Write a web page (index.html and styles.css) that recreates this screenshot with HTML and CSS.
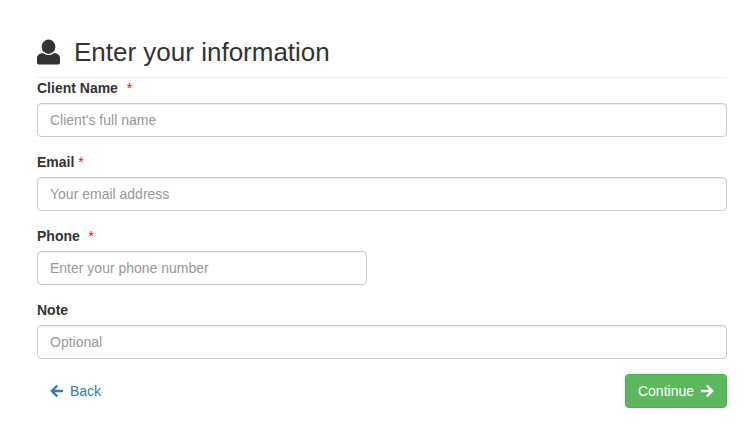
FILE: index.html
```html
<!DOCTYPE html>
<html lang="en">
<head>
    <meta charset="UTF-8">
    <title>Enter your information</title>
    <link rel="stylesheet" href="styles.css">
</head>
<body>
    <div class="container">
        <h2 class="page-title">
            <svg class="title-icon" viewBox="0 0 24 26" aria-hidden="true">
                <ellipse cx="12" cy="7.500" rx="7.200" ry="7.500"/>
                <path d="M1.500 26A1.500 1.500 0 0 1 0 24.500v-5C0 16 3 14.200 6.500 14c1.500 1.400 3.400 2.200 5.500 2.200s4-.8 5.500-2.200c3.500.2 6.500 2 6.500 5.500v5a1.500 1.500 0 0 1-1.500 1.500z"/>
            </svg>
            Enter your information
        </h2>
        <form>
            <div class="form-group">
                <label for="client-name">Client Name &nbsp;<span class="required wide">*</span></label>
                <input type="text" id="client-name" class="form-control" placeholder="Client's full name">
            </div>
            <div class="form-group">
                <label for="email">Email <span class="required">*</span></label>
                <input type="text" id="email" class="form-control" placeholder="Your email address">
            </div>
            <div class="form-group">
                <label for="phone">Phone &nbsp;<span class="required wide">*</span></label>
                <input type="text" id="phone" class="form-control phone-input" placeholder="Enter your phone number">
            </div>
            <div class="form-group">
                <label for="note">Note</label>
                <input type="text" id="note" class="form-control" placeholder="Optional">
            </div>
            <div class="form-actions">
                <a href="#" class="btn btn-link">
                    <svg class="btn-icon" viewBox="0 0 14 14" aria-hidden="true"><path d="M7.300 1.500 1.800 7l5.500 5.500M2.500 7H13" /></svg>
                    Back
                </a>
                <button type="button" class="btn btn-success">
                    Continue
                    <svg class="btn-icon" viewBox="0 0 14 14" aria-hidden="true"><path d="M6.700 1.500 12.200 7l-5.500 5.500M11.500 7H1" /></svg>
                </button>
            </div>
        </form>
    </div>
</body>
</html>
```

FILE: styles.css
```css
/* Bootstrap-like form page */
* {
    box-sizing: border-box;
}

body {
    margin: 0;
    background-color: #fff;
    color: #333;
    font-family: "Liberation Sans", Arial, sans-serif;
    font-size: 14px;
    line-height: 20px;
}

.container {
    padding: 30px 24px 0 37px;
}

.page-title {
    display: flex;
    align-items: center;
    gap: 14px;
    height: 48px;
    margin: 0;
    border-bottom: 1px solid #eee;
    padding-bottom: 4px;
    font-size: 26px;
    font-weight: 400;
    line-height: 30px;
}

.title-icon {
    width: 23px;
    height: 26px;
    fill: #333;
}

.form-group {
    margin-bottom: 15px;
}

label {
    display: block;
    margin-bottom: 5px;
    font-weight: 700;
}

.required {
    color: red;
    font-weight: 400;
}

.required.wide {
    margin-left: 1px;
}

.form-control {
    display: block;
    width: 100%;
    height: 34px;
    padding: 6px 12px;
    border: 1px solid #ccc;
    border-radius: 4px;
    background-color: #fff;
    box-shadow: inset 0 1px 1px rgba(0,0,0,.075);
    color: #555;
    font-family: inherit;
    font-size: 14px;
    line-height: 20px;
}

.form-control::placeholder {
    color: #999;
    opacity: 1;
}

.phone-input {
    width: 330px;
}

.form-actions {
    display: flex;
    justify-content: space-between;
}

.btn {
    display: inline-flex;
    align-items: center;
    gap: 6px;
    height: 34px;
    padding: 6px 12px;
    border: 1px solid transparent;
    border-radius: 4px;
    font-family: inherit;
    font-size: 14px;
    line-height: 20px;
    text-decoration: none;
    cursor: pointer;
}

.btn-link {
    color: #337ab7;
}

.btn-success {
    border-color: #4cae4c;
    background-color: #5cb85c;
    color: #fff;
}

.btn-icon {
    width: 14px;
    height: 14px;
    fill: none;
    stroke: currentColor;
    stroke-width: 2.400;
}
```
